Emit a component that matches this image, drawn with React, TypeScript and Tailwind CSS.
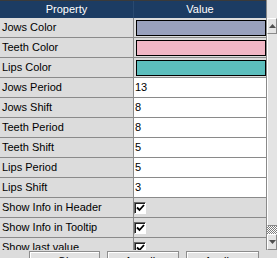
import React from 'react';

type Row = {
  label: string;
  kind: 'color' | 'text' | 'check';
  value?: string;
};

const rows: Row[] = [
  { label: 'Jows Color', kind: 'color', value: '#99a1bd' },
  { label: 'Teeth Color', kind: 'color', value: '#f1b6c5' },
  { label: 'Lips Color', kind: 'color', value: '#5cbebd' },
  { label: 'Jows Period', kind: 'text', value: '13' },
  { label: 'Jows Shift', kind: 'text', value: '8' },
  { label: 'Teeth Period', kind: 'text', value: '8' },
  { label: 'Teeth Shift', kind: 'text', value: '5' },
  { label: 'Lips Period', kind: 'text', value: '5' },
  { label: 'Lips Shift', kind: 'text', value: '3' },
  { label: 'Show Info in Header', kind: 'check' },
  { label: 'Show Info in Tooltip', kind: 'check' },
  { label: 'Show last value', kind: 'check' },
];

const Check = () => (
  <div className="ml-[0px] w-[12px] h-[12px] bg-white border-t border-l border-t-[#6a6a6a] border-l-[#6a6a6a] border-b border-r border-b-white border-r-white shadow-[inset_1px_1px_0_#202020] flex items-center justify-center">
    <svg width="9" height="8" viewBox="0 0 9 8">
      <path d="M1 3.5 L3.5 6 L8 1" stroke="#000" strokeWidth="1.8" fill="none" />
    </svg>
  </div>
);

const PropertyRow = ({ row }: { row: Row }) => (
  <div className="flex h-[20px] border-b border-[#8a8a8a]">
    <div className="w-[134px] shrink-0 bg-[#dcdcdc] border-r border-[#8a8a8a] pl-[2px] leading-[19px] whitespace-nowrap overflow-hidden">
      {row.label}
    </div>
    {row.kind === 'color' && (
      <div className="flex-1 bg-[#dcdcdc] pt-[2px] pl-[2px]">
        <div className="h-[16px] w-[130px] border border-black" style={{ backgroundColor: row.value }} />
      </div>
    )}
    {row.kind === 'text' && (
      <div className="flex-1 bg-white pl-[1px] leading-[19px]">{row.value}</div>
    )}
    {row.kind === 'check' && (
      <div className="flex-1 bg-[#dcdcdc] pt-[4px] pl-[0px]">
        <Check />
      </div>
    )}
  </div>
);

const ScrollBar = () => (
  <div className="w-[10px] shrink-0 h-[250px] flex flex-col bg-[#dcdcdc]">
    <div className="h-[18px] bg-[#e6e6e6]" />
    <div className="h-[16px] border border-[#8a8a8a] border-t-white border-l-white bg-[#e4e4e4] flex items-center justify-center">
      <svg width="7" height="4" viewBox="0 0 7 4">
        <path d="M0 4 L3.5 0 L7 4 Z" fill="#505050" />
      </svg>
    </div>
    <div className="flex-1 bg-[#e4e4e4] border-l border-white border-b border-b-[#8a8a8a]" />
    <div className="h-[8px] bg-[repeating-conic-gradient(#7c7c7c_0_25%,#ffffff_0_50%)] bg-[length:2px_2px]" />
    <div className="h-[16px] border border-[#8a8a8a] border-t-white border-l-white bg-[#e4e4e4] flex items-center justify-center">
      <svg width="7" height="4" viewBox="0 0 7 4">
        <path d="M0 0 L3.5 4 L7 0 Z" fill="#505050" />
      </svg>
    </div>
  </div>
);

const Button = ({ label, width }: { label: string; width: string }) => (
  <div
    className={`${width} h-[22px] shrink-0 border border-[#8c8c8c] bg-[#e2e2e2] shadow-[inset_1px_1px_0_#ffffff] flex justify-center pt-[2px] leading-[14px]`}
  >
    {label}
  </div>
);

export default function App() {
  return (
    <div
      className="w-[277px] h-[258px] overflow-hidden bg-[#dcdcdc] text-[11px] text-black flex flex-col"
      style={{ fontFamily: '"Liberation Sans", Arial, sans-serif' }}
    >
      <div className="flex h-[250px] shrink-0 overflow-hidden">
        <div className="w-[267px] shrink-0 flex flex-col border-r border-[#8a8a8a]">
          <div className="flex h-[18px] shrink-0 bg-[#1c3c63] border-t border-[#3a3a3a] text-white leading-[16px]">
            <div className="w-[134px] shrink-0 text-center border-r border-[#2a4a70]">Property</div>
            <div className="flex-1 text-center">Value</div>
          </div>
          {rows.map((r) => (
            <PropertyRow key={r.label} row={r} />
          ))}
        </div>
        <ScrollBar />
      </div>
      <div className="flex gap-[7px] pl-[29px] pt-[1px]">
        <Button label="Ok" width="w-[71px]" />
        <Button label="Annulla" width="w-[72px]" />
        <Button label="Applica" width="w-[73px]" />
      </div>
    </div>
  );
}
